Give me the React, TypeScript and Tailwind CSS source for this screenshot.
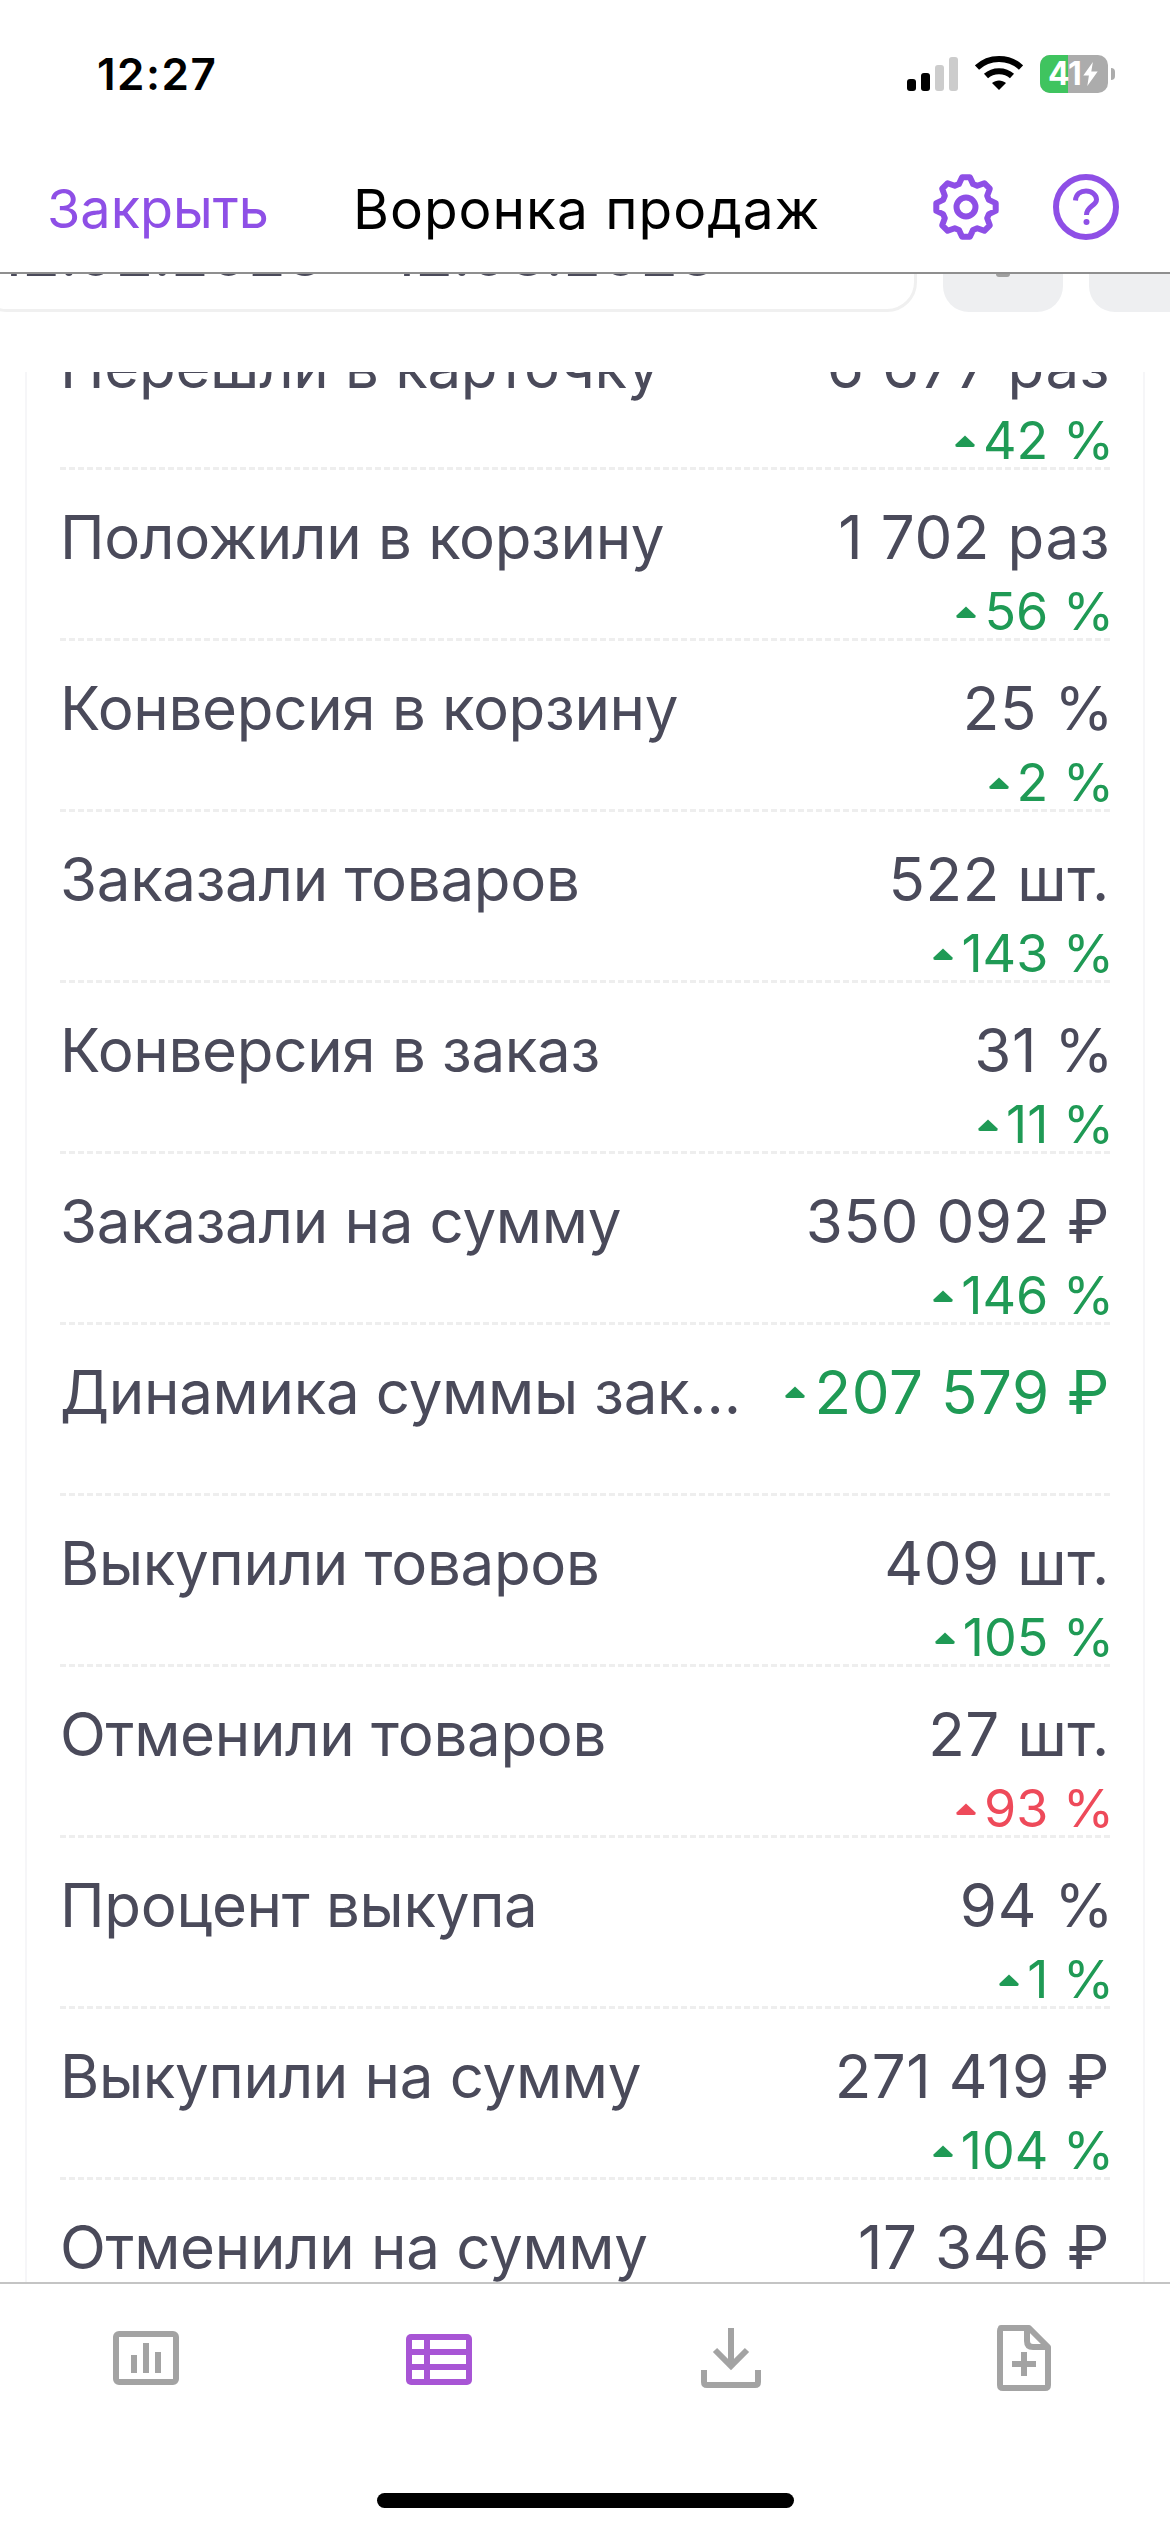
const rows = [
  { label: "Перешли в карточку", value: "6 677 раз", delta: "42 %" },
  { label: "Положили в корзину", value: "1 702 раз", delta: "56 %" },
  { label: "Конверсия в корзину", value: "25 %", delta: "2 %" },
  { label: "Заказали товаров", value: "522 шт.", delta: "143 %" },
  { label: "Конверсия в заказ", value: "31 %", delta: "11 %" },
  { label: "Заказали на сумму", value: "350 092 ₽", delta: "146 %" },
  { label: "Динамика суммы заказов", value: "207 579 ₽", up: true },
  { label: "Выкупили товаров", value: "409 шт.", delta: "105 %" },
  { label: "Отменили товаров", value: "27 шт.", delta: "93 %", bad: true },
  { label: "Процент выкупа", value: "94 %", delta: "1 %" },
  { label: "Выкупили на сумму", value: "271 419 ₽", delta: "104 %" },
  { label: "Отменили на сумму", value: "17 346 ₽" },
];

function Triangle() {
  return (
    <svg width="20" height="12" viewBox="0 0 20 12" className="shrink-0" fill="currentColor">
      <path d="M10 0.5 L19.5 9.5 Q20 12 18 12 L2 12 Q0 12 0.5 9.5 Z" />
    </svg>
  );
}

function Gear() {
  // 8 flat-topped teeth around the ring
  const pts: string[] = [];
  for (let i = 0; i < 8; i++) {
    const a = (i * Math.PI) / 4 - Math.PI / 2;
    const at = (r: number, d: number) =>
      `${(33 + r * Math.cos(a + d)).toFixed(1)},${(33 + r * Math.sin(a + d)).toFixed(1)}`;
    pts.push(at(24, -0.3), at(30, -0.13), at(30, 0.13), at(24, 0.3));
  }
  return (
    <svg width="66" height="66" viewBox="0 0 66 66" fill="none" stroke="#8e4fe6" strokeWidth="6" strokeLinejoin="round">
      <polygon points={pts.join(" ")} />
      <circle cx="33" cy="33" r="9.5" />
    </svg>
  );
}

function Help() {
  return (
    <svg width="66" height="66" viewBox="0 0 66 66" fill="none" stroke="#8e4fe6" strokeWidth="6">
      <circle cx="33" cy="33" r="30" />
      <path d="M22.5 26.5 C23 20 28 17 33 17 C39 17 43.5 21 43.5 25.5 C43.5 32 33.5 32 33.5 41" strokeWidth="5" />
      <circle cx="33.5" cy="48" r="3" fill="#8e4fe6" stroke="none" />
    </svg>
  );
}

function Signal() {
  return (
    <div className="flex items-end gap-[5px] h-[34px]">
      <div className="w-[9px] h-[12px] rounded-[3px] bg-black" />
      <div className="w-[9px] h-[18px] rounded-[3px] bg-black" />
      <div className="w-[9px] h-[26px] rounded-[3px] bg-[#cccccc]" />
      <div className="w-[9px] h-[34px] rounded-[3px] bg-[#cccccc]" />
    </div>
  );
}

function Wifi() {
  return (
    <svg width="48" height="35" viewBox="0 0 48 35" fill="none" stroke="#000" strokeWidth="6">
      <path d="M2 12.5 C14 1 34 1 46 12.5" />
      <path d="M11 21 C18 14.5 30 14.5 37 21" />
      <path d="M17 28 L24 35 L31 28 C27 24.5 21 24.5 17 28 Z" fill="#000" stroke="none" />
    </svg>
  );
}

function Battery() {
  return (
    <div className="flex items-center gap-[3px]">
      <div className="relative w-[68px] h-[38px] rounded-[10px] overflow-hidden bg-[#acacac] flex items-center pl-[8px] gap-[1px]">
        <div className="absolute left-0 top-0 bottom-0 w-[28px] bg-[#3fc45f]" />
        <span className="relative text-white text-[32px] leading-none font-bold tracking-[-0.5px]">41</span>
        <svg width="17" height="24" viewBox="0 0 20 30" fill="#fff" className="relative shrink-0">
          <path d="M13 0 L1 17 L8 17 L6 30 L19 12 L11 12 Z" />
        </svg>
      </div>
      <div className="w-[4px] h-[12px] rounded-r-[4px] bg-[#acacac]" />
    </div>
  );
}

function ChartIcon() {
  return (
    <svg width="72" height="72" viewBox="0 0 72 72" fill="#a3a3a3">
      <rect x="6" y="12" width="60" height="48" rx="3" fill="none" stroke="#a3a3a3" strokeWidth="6" />
      <rect x="21" y="33" width="6" height="18" />
      <rect x="33" y="21" width="6" height="30" />
      <rect x="45" y="30" width="6" height="21" />
    </svg>
  );
}

function TableIcon() {
  return (
    <svg width="72" height="72" viewBox="0 0 72 72">
      <rect x="3" y="12" width="66" height="51" rx="5" fill="#a855d5" />
      <g fill="#fff">
        <rect x="9" y="18" width="12" height="9" />
        <rect x="27" y="18" width="36" height="9" />
        <rect x="9" y="33" width="12" height="9" />
        <rect x="27" y="33" width="36" height="9" />
        <rect x="9" y="48" width="12" height="9" />
        <rect x="27" y="48" width="36" height="9" />
      </g>
    </svg>
  );
}

function DownloadIcon() {
  return (
    <svg width="72" height="72" viewBox="0 0 72 72" fill="none" stroke="#a3a3a3" strokeWidth="6">
      <path d="M36 6 V44" />
      <path d="M20 28 L36 44 L52 28" />
      <path d="M9 48 V60 Q9 63 12 63 H60 Q63 63 63 60 V48" />
    </svg>
  );
}

function FilePlusIcon() {
  return (
    <svg width="72" height="72" viewBox="0 0 72 72" fill="none" stroke="#a3a3a3" strokeWidth="6" strokeLinejoin="round">
      <path d="M13 6 H41 L60 25 V63 Q60 66 57 66 H15 Q12 66 12 63 V9 Q12 6 15 6 Z" />
      <path d="M39 6 V19 Q39 25 45 25 H60" />
      <path d="M24 42 H48 M36 30 V54" />
    </svg>
  );
}

export default function App() {
  return (
    <div className="w-[1170px] h-[2532px] overflow-hidden bg-white flex flex-col font-['Inter',sans-serif]">
      {/* status bar */}
      <div className="h-[148px] shrink-0 flex justify-between pl-[97px] pr-[55px] pt-[47px]">
        <span className="text-[44px] leading-[54px] font-semibold tracking-[1.5px] text-black">12:27</span>
        <div className="flex items-start gap-[17px] pt-[8px]">
          <div className="pt-[2px]"><Signal /></div>
          <Wifi />
          <Battery />
        </div>
      </div>

      {/* nav */}
      <div className="h-[126px] shrink-0 border-b-2 border-[#8f8f8f] flex items-start pl-[47px] pr-[51px] pt-[26px]">
        <span className="text-[54px] leading-[70px] text-[#8e4fe6]">Закрыть</span>
        <span className="text-[55px] leading-[70px] tracking-[1px] text-black ml-[84px]">Воронка продаж</span>
        <div className="ml-auto flex gap-[54px]">
          <Gear />
          <Help />
        </div>
      </div>

      {/* date filter, scrolled mostly under the nav */}
      <div className="h-[98px] shrink-0 overflow-hidden flex items-end gap-[26px] pb-[60px]">
        <div className="w-[940px] h-[120px] ml-[-23px] shrink-0 rounded-[30px] border-[3px] border-[#f0f0f0] flex items-end pb-[24px] pl-[17px] text-[62px] leading-none text-[#4a4a5a]">
          12.02.2023 – 12.03.2023
        </div>
        <div className="w-[120px] h-[120px] shrink-0 rounded-[26px] bg-[#eeeff1] flex justify-center items-end pb-[35px]">
          <div className="w-[14px] h-[3px] rounded-b-full bg-[#a0a0a0]" />
        </div>
        <div className="w-[120px] h-[120px] shrink-0 rounded-[26px] bg-[#eeeff1]" />
      </div>

      {/* funnel table */}
      <div className="flex-1 min-h-0 overflow-hidden px-[25px]">
        <div className="border-x-2 border-[#f6f6f8] px-[33px] mt-[-73px]">
          {rows.map((r) => (
            <div key={r.label} className="h-[171px] border-b-[3px] border-dashed border-[#eeeeee] pt-[31px] flex justify-between gap-[40px] text-[#4a4a5a]">
              <span className="flex-1 min-w-0 truncate text-[60px] leading-[72px] tracking-[-0.3px]">{r.label}</span>
              <div className="shrink-0 flex flex-col items-end">
                {r.up ? (
                  <div className="flex items-center gap-[10px] text-[60px] leading-[72px] tracking-[0.6px] text-[#1f9a55]">
                    <Triangle />
                    {r.value}
                  </div>
                ) : (
                  <span className={`text-[60px] leading-[72px] tracking-[0.6px] ${r.value.endsWith("%") ? "mr-[-4px]" : ""}`}>{r.value}</span>
                )}
                {r.delta && (
                  <div className={`flex items-center gap-[8px] text-[52px] leading-[62px] mt-[8px] mr-[-4px] ${r.bad ? "text-[#ee4a5a]" : "text-[#1f9a55]"}`}>
                    <Triangle />
                    {r.delta}
                  </div>
                )}
              </div>
            </div>
          ))}
        </div>
      </div>

      {/* tab bar */}
      <div className="h-[250px] shrink-0 border-t-2 border-[#c4c4c4] bg-white flex flex-col items-center">
        <div className="w-full grid grid-cols-4 pt-[38px]">
          <div className="flex justify-center"><ChartIcon /></div>
          <div className="flex justify-center"><TableIcon /></div>
          <div className="flex justify-center"><DownloadIcon /></div>
          <div className="flex justify-center"><FilePlusIcon /></div>
        </div>
        <div className="mt-[99px] w-[417px] h-[15px] rounded-full bg-black" />
      </div>
    </div>
  );
}
